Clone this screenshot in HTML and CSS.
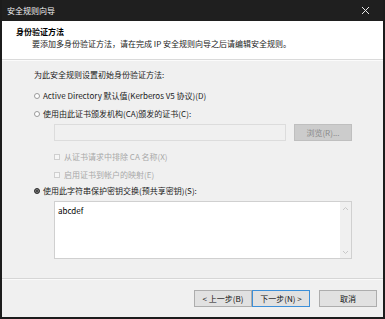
FILE: index.html
```html
<!DOCTYPE html>
<html lang="zh-CN">
<head>
<meta charset="utf-8">
<title>安全规则向导</title>
<link rel="stylesheet" href="styles.css">
</head>
<body>
<div class="window">
  <div class="titlebar">
    <span class="title">安全规则向导</span>
    <span class="close">
      <svg width="9" height="9" viewBox="0 0 9 9"><path d="M1 1L8 8M8 1L1 8" stroke="#e8e8e8" stroke-width="1"/></svg>
    </span>
  </div>
  <div class="header">
    <div class="h-title">身份验证方法</div>
    <div class="h-sub">要添加多身份验证方法，请在完成 IP 安全规则向导之后请编辑安全规则。</div>
  </div>
  <div class="body">
    <div class="intro">为此安全规则设置初始身份验证方法:</div>
    <div class="opt r1"><span class="radio"></span>Active Directory 默认值(Kerberos V5 协议)(D)</div>
    <div class="opt r2"><span class="radio"></span>使用由此证书颁发机构(CA)颁发的证书(C):</div>
    <div class="certrow">
      <div class="certbox"></div>
      <div class="btn disabled">浏览(R)...</div>
    </div>
    <div class="chk c1"><span class="box"></span>从证书请求中排除 CA 名称(X)</div>
    <div class="chk c2"><span class="box"></span>启用证书到帐户的映射(E)</div>
    <div class="opt r3"><span class="radio on"></span>使用此字符串保护密钥交换(预共享密钥)(S):</div>
    <div class="textarea">
      <div class="tval">abcdef</div>
      <div class="sbar">
        <svg width="7" height="5" viewBox="0 0 7 5"><path d="M1 4L3.5 1.5L6 4" fill="none" stroke="#c8c8c8" stroke-width="1"/></svg>
        <svg width="7" height="5" viewBox="0 0 7 5"><path d="M1 1L3.5 3.5L6 1" fill="none" stroke="#c8c8c8" stroke-width="1"/></svg>
      </div>
    </div>
  </div>
  <div class="footer">
    <div class="btn">&lt; 上一步(B)</div>
    <div class="btn default">下一步(N) &gt;</div>
    <div class="btn cancel">取消</div>
  </div>
</div>
</body>
</html>
```
FILE: styles.css
```css
* { box-sizing: border-box; }
html, body { margin: 0; padding: 0; background: #ffffff; }
body {
  font-family: "Noto Sans CJK SC", "Noto Sans", sans-serif;
  font-size: 8px;
  color: #1a1a1a;
}
.window {
  width: 385px;
  height: 319px;
  background: #f0f0f0;
  border: 1px solid #1c1c1c;
  border-left-width: 2px;
  border-right-width: 2px;
  border-bottom-width: 2px;
  border-top: none;
  display: flex;
  flex-direction: column;
}
.titlebar {
  height: 21px;
  background: #1f1f1f;
  color: #f2f2f2;
  display: flex;
  align-items: center;
  justify-content: space-between;
  padding: 0 13px 0 5px;
  font-size: 8px;
  flex: none;
}
.close { display: flex; align-items: center; }
.header {
  background: #ffffff;
  height: 39px;
  padding: 5px 0 0 14px;
  border-bottom: 1px solid #dadada;
  box-shadow: 0 1px 0 #fbfbfb;
  flex: none;
}
.h-title { font-weight: bold; font-size: 8px; line-height: 12px; color: #000; }
.h-sub { padding-left: 16px; line-height: 12px; color: #222; }
.body {
  flex: 1;
  padding: 9px 0 0 32px;
  border-bottom: 1px solid #d6d6d6;
  box-shadow: 0 1px 0 #fafafa;
}
.intro { line-height: 12px; }
.opt, .chk {
  display: flex;
  align-items: center;
  line-height: 12px;
}
.r1 { margin-top: 9px; }
.r2 { margin-top: 6px; }
.radio {
  width: 6px; height: 6px;
  border: 1px solid #9a9a9a;
  border-radius: 50%;
  background: #fff;
  margin-right: 3px;
  flex: none;
}
.radio.on { background: #333; border-color: #333; box-shadow: inset 0 0 0 1px #888; }
.certrow {
  display: flex;
  margin: 4px 0 0 20px;
  gap: 8px;
}
.certbox {
  width: 232px;
  height: 17px;
  border: 1px solid #dcdcdc;
  background: #f0f0f0;
}
.btn {
  height: 17px;
  width: 58px;
  display: flex;
  align-items: center;
  justify-content: center;
  background: #e1e1e1;
  border: 1px solid #adadad;
  color: #111;
  font-size: 8px;
}
.btn.disabled {
  background: #cccccc;
  border-color: #bfbfbf;
  color: #8a8a8a;
}
.chk { padding-left: 20px; color: #a8a8a8; }
.c1 { margin-top: 10px; }
.c2 { margin-top: 6px; }
.box {
  width: 6px; height: 6px;
  border: 1px solid #cfcfcf;
  background: #f6f6f6;
  margin-right: 4px;
  flex: none;
}
.r3 { margin-top: 4px; }
.textarea {
  margin: 4px 0 0 20px;
  width: 298px;
  height: 58px;
  background: #fff;
  border: 1px solid #d0d0d0;
  display: flex;
}
.tval { flex: 1; padding: 3px 0 0 3px; line-height: 12px; color: #000; }
.sbar {
  width: 11px;
  background: #f0f0f0;
  display: flex;
  flex-direction: column;
  justify-content: space-between;
  align-items: center;
  padding: 4px 0 3px;
}
.footer {
  flex: none;
  height: 38px;
  display: flex;
  align-items: flex-start;
  padding: 11px 0 0 192px;
}
.footer .btn { width: 58px; }
.btn.default { border-color: #3c8fd8; }
.btn.cancel { margin-left: 9px; }
```
